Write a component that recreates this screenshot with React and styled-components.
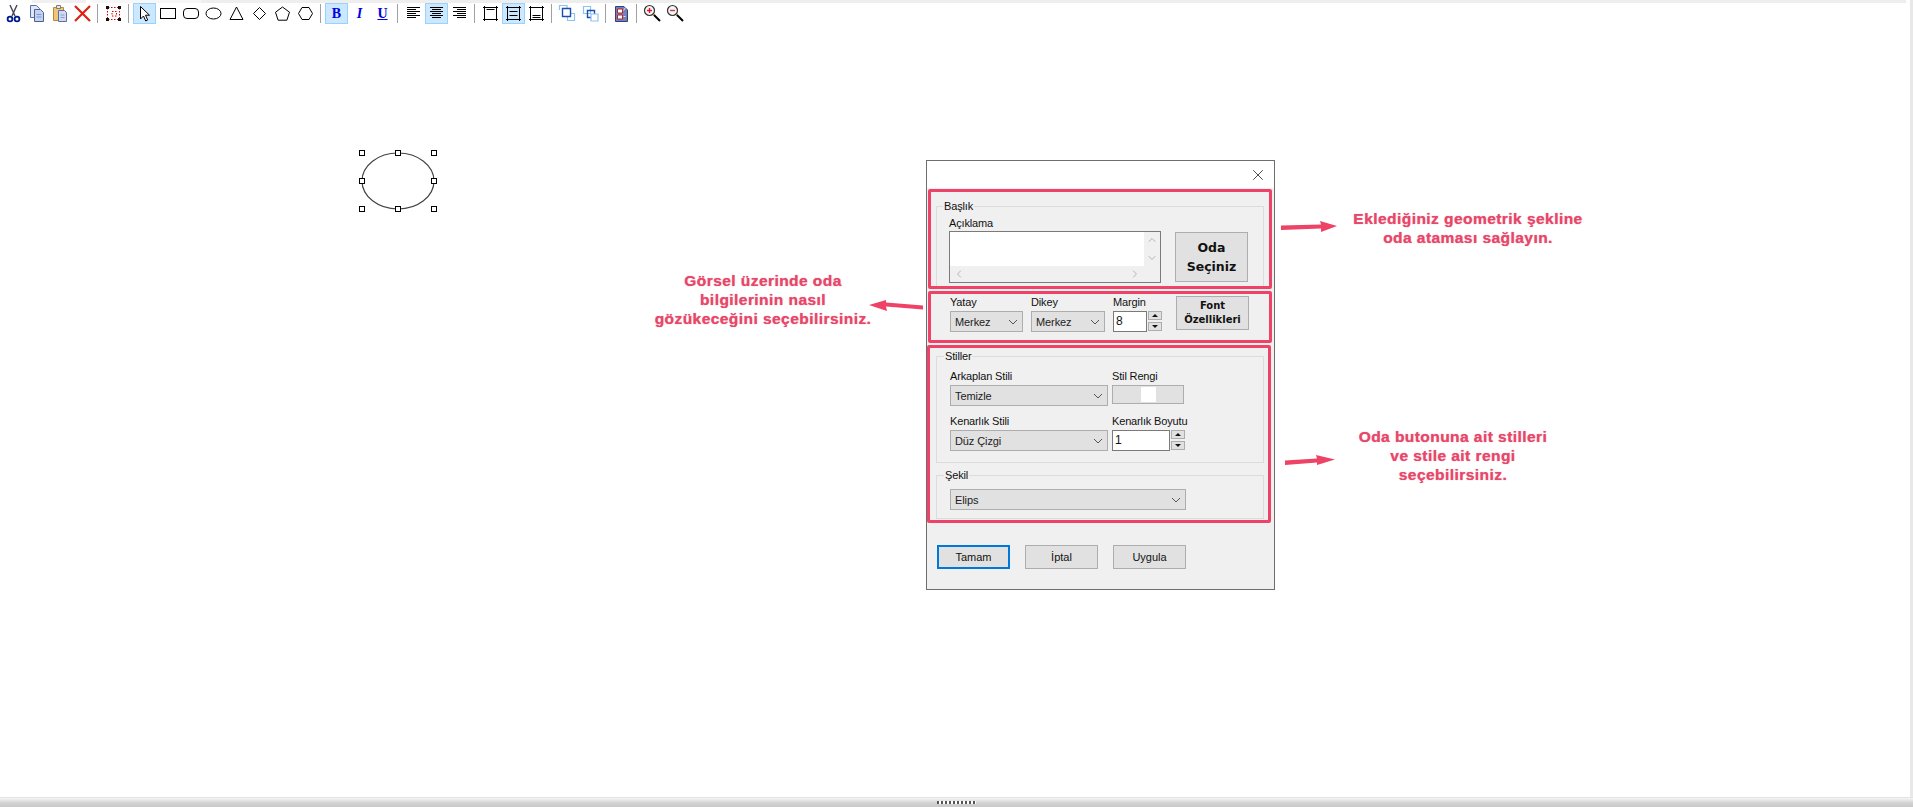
import React from "react";
import styled, { createGlobalStyle } from "styled-components";
import { ChevronUp, ChevronDown, ChevronLeft, ChevronRight, X } from "lucide-react";

const GlobalStyle = createGlobalStyle`
  html, body {
    margin: 0;
    padding: 0;
    background: #fff;
    overflow: hidden;
  }
  * {
    box-sizing: border-box;
  }
`;

const Page = styled.div`
  height: 807px;
  display: flex;
  flex-direction: column;
  font-family: "Liberation Sans", Arial, sans-serif;
  color: #111;
`;

const Workspace = styled.div`
  flex: 1;
  display: flex;
  flex-direction: column;
  border-right: 3px solid #e8e8e8;
  min-height: 0;
`;

const TopStrip = styled.div`
  height: 3px;
  margin: 0 4px 0 32px;
  background: linear-gradient(90deg, #f0f0f0 0 54px, #fff 54px 60px, #f7f7f7 60px 169px, #eeeeee 169px);
`;

const Toolbar = styled.div`
  height: 21px;
  display: flex;
  align-items: stretch;
  padding-left: 2px;
  background: #fff;
`;

const ToolButton = styled.div`
  width: 23px;
  display: flex;
  align-items: center;
  justify-content: center;
  border: 1px solid ${({ $active }) => ($active ? "#99d1ff" : "transparent")};
  background: ${({ $active }) => ($active ? "#cce8ff" : "transparent")};
`;

const ToolSep = styled.div`
  width: 1px;
  margin: 1px 4px 1px 3px;
  background: #a0a0a0;
`;

const Letter = styled.span`
  font-family: "Liberation Serif", serif;
  font-size: 14px;
  font-weight: 700;
  color: #0000e0;
  font-style: ${({ $italic }) => ($italic ? "italic" : "normal")};
  text-decoration: ${({ $under }) => ($under ? "underline" : "none")};
`;

const Canvas = styled.div`
  flex: 1;
  position: relative;
`;

const Splitter = styled.div`
  height: 10px;
  display: flex;
  align-items: center;
  justify-content: center;
  background: linear-gradient(#dcdcdc, #f2f2f2 15%, #d2d2d2 60%, #c8c8c8);
`;

const Grip = styled.div`
  width: 39px;
  height: 3px;
  background: repeating-linear-gradient(90deg, #555 0 2px, #fff 2px 4px);
`;

const Shape = styled.svg`
  position: absolute;
  left: 358px;
  top: 122px;
`;

const Dialog = styled.div`
  position: absolute;
  left: 926px;
  top: 136px;
  width: 349px;
  height: 430px;
  border: 1px solid #6e6e6e;
  background: #f0f0f0;
`;

const TitleBar = styled.div`
  height: 27px;
  background: #fff;
  display: flex;
  align-items: center;
  justify-content: flex-end;
  padding-right: 7px;
`;

const Section = styled.section`
  border: 3px solid #ee4266;
  border-radius: 2px;
  overflow: hidden;
  margin: ${({ $margin }) => $margin};
  height: ${({ $height }) => $height}px;
  padding: ${({ $padding }) => $padding};
`;

const Group = styled.fieldset`
  margin: 0;
  padding: ${({ $padding }) => $padding};
  border: 1px solid #dcdcdc;
  min-width: 0;
  width: 328px;
  height: ${({ $height }) => $height}px;
  & + & {
    margin-top: 5px;
  }
`;

const Legend = styled.legend`
  margin-left: -6px;
  padding: 0 1px;
  font-size: 11px;
  letter-spacing: -0.15px;
  line-height: 14px;
`;

const Label = styled.div`
  font-size: 11px;
  letter-spacing: -0.15px;
  line-height: 13px;
  height: 13px;
  white-space: nowrap;
  margin-bottom: ${({ $gap }) => $gap ?? 2}px;
`;

const Row = styled.div`
  display: flex;
  align-items: ${({ $align }) => $align || "flex-start"};
  gap: ${({ $gap }) => $gap}px;
`;

const Field = styled.div`
  width: ${({ $width }) => $width}px;
`;

const TextBox = styled.div`
  width: 212px;
  height: 52px;
  border: 1px solid #7a7a7a;
  background: #f0f0f0;
  display: grid;
  grid-template-columns: 1fr 16px;
  grid-template-rows: 1fr 16px;
`;

const TextBoxArea = styled.div`
  background: #fff;
`;

const ScrollV = styled.div`
  display: flex;
  flex-direction: column;
  align-items: center;
  justify-content: space-between;
  padding: 2px 0;
  color: #b4b4b4;
`;

const ScrollH = styled.div`
  display: flex;
  align-items: center;
  justify-content: space-between;
  padding: 0 3px;
  color: #b4b4b4;
`;

const Button = styled.div`
  width: ${({ $width }) => $width || 73}px;
  height: ${({ $height }) => $height || 24}px;
  margin-top: ${({ $top }) => $top || 0}px;
  border: 1px solid ${({ $focus }) => ($focus ? "#0078d7" : "#adadad")};
  border-width: ${({ $focus }) => ($focus ? 2 : 1)}px;
  background: #e1e1e1;
  display: flex;
  align-items: center;
  justify-content: center;
  text-align: center;
  font-size: 11px;
`;

const BoldButton = styled(Button)`
  font-family: "DejaVu Sans", sans-serif;
  font-weight: 700;
  font-size: ${({ $size }) => $size}px;
  line-height: ${({ $lead }) => $lead}px;
`;

const Select = styled.div`
  width: ${({ $width }) => $width}px;
  height: 21px;
  border: 1px solid #adadad;
  background: #e1e1e1;
  display: flex;
  align-items: center;
  justify-content: space-between;
  padding: 0 4px 0 4px;
  font-size: 11px;
  letter-spacing: -0.1px;
  color: #222;
`;

const Spin = styled.div`
  display: flex;
  gap: 1px;
`;

const SpinInput = styled.div`
  width: ${({ $width }) => $width}px;
  height: 21px;
  border: 1px solid #7a7a7a;
  background: #fff;
  padding-left: 2px;
  font-size: 12px;
  line-height: 19px;
`;

const SpinArrows = styled.div`
  display: flex;
  flex-direction: column;
  justify-content: space-between;
  width: 14px;
  height: 20px;
`;

const SpinArrow = styled.div`
  height: 9px;
  border: 1px solid #adadad;
  background: #e1e1e1;
  display: flex;
  align-items: center;
  justify-content: center;
  &::after {
    content: "";
    border-left: 3px solid transparent;
    border-right: 3px solid transparent;
    ${({ $down }) => ($down ? "border-top" : "border-bottom")}: 3px solid #111;
  }
`;

const ColorButton = styled.div`
  width: 72px;
  height: 19px;
  margin-top: 1px;
  border: 1px solid #adadad;
  background: #e1e1e1;
  display: flex;
  align-items: center;
  justify-content: center;
  &::after {
    content: "";
    width: 15px;
    height: 15px;
    border-radius: 1px;
    background: #fff;
  }
`;

const StyleGrid = styled.div`
  display: grid;
  grid-template-columns: 158px 73px;
  column-gap: 4px;
  row-gap: 9px;
`;

const DialogButtons = styled.div`
  display: flex;
  padding-left: 10px;
  margin-top: 22px;
  gap: 15px;
`;

const Note = styled.div`
  position: absolute;
  left: ${({ $x }) => $x}px;
  top: ${({ $y }) => $y}px;
  transform: translateX(-50%);
  text-align: center;
  white-space: nowrap;
  font-size: 15.5px;
  font-weight: 700;
  line-height: 19.2px;
  letter-spacing: 0.45px;
  color: #e6476a;
  text-shadow: 0 0 1px rgba(230, 71, 106, 0.8);
`;

const ArrowSvg = styled.svg`
  position: absolute;
  left: ${({ $x }) => $x}px;
  top: ${({ $y }) => $y}px;
`;

const Icon = ({ children }) => (
  <svg width="19" height="19" viewBox="0 0 19 19" fill="none" stroke="#000" strokeWidth="1">
    {children}
  </svg>
);

const CutIcon = () => (
  <Icon>
    <path d="M6 1l5 11M13 1L8 12" stroke="#445" strokeWidth="1.4" />
    <circle cx="6" cy="15" r="2.4" stroke="#001a8c" strokeWidth="1.8" />
    <circle cx="13" cy="15" r="2.4" stroke="#001a8c" strokeWidth="1.8" />
  </Icon>
);

const CopyIcon = () => (
  <Icon>
    <path d="M3.5 1.5h6l3 3v9h-9z" fill="#dfe6f5" stroke="#5a6ea8" />
    <path d="M7.5 5.5h6l3 3v9h-9z" fill="#c4d2ee" stroke="#4a5f9c" />
    <path d="M9.5 10.5h5M9.5 13h5" stroke="#7f97cf" />
  </Icon>
);

const PasteIcon = () => (
  <Icon>
    <path d="M3.5 3.5h10v13h-10z" fill="#f2c477" stroke="#b98a3a" />
    <path d="M6.5 1.5h4v3h-4z" fill="#dfe6f5" stroke="#7b7b7b" />
    <path d="M8.5 6.5h6l2 2v9h-8z" fill="#cfdaf0" stroke="#5a6ea8" />
    <path d="M10.5 11h4M10.5 13.5h4" stroke="#8aa0d0" />
  </Icon>
);

const DeleteIcon = () => (
  <Icon>
    <path d="M2 2l15 15M17 2L2 17" stroke="#e02010" strokeWidth="2.2" />
  </Icon>
);

const SelectIcon = () => (
  <svg width="17" height="17" viewBox="0 0 17 17" fill="none">
    <path d="M3 2.5h11M3 14.5h11M2.5 3v11M14.5 3v11" stroke="#e00000" strokeDasharray="1.5 1.5" />
    <path d="M7 6.5h4.5v4.5h-4.5z" stroke="#e00000" strokeDasharray="1.5 1.5" />
    <path d="M1 1h3v3H1zM13 1h3v3h-3zM1 13h3v3H1zM13 13h3v3h-3z" fill="#111" />
  </svg>
);

const PointerIcon = () => (
  <Icon>
    <path d="M5.5 2.5v12.5l3-3 2.2 5 2-1-2.2-4.8h4z" fill="#fff" />
  </Icon>
);

const AlignIcon = ({ rows }) => (
  <Icon>
    {rows.map(([x1, x2], i) => (
      <path key={i} d={`M${x1} ${3.5 + i * 2}H${x2}`} />
    ))}
  </Icon>
);

const FrameIcon = ({ lines }) => (
  <Icon>
    <path d="M2 3.5h15M2 15.5h15M3.5 2v15M15.5 2v15" />
    {lines.map((y) => (
      <path key={y} d={`M5.5 ${y}h8`} />
    ))}
  </Icon>
);

const OrderIcon = ({ front }) => (
  <Icon>
    {front ? (
      <>
        <path d="M9.5 9.5h7v7h-7z" stroke="#8cc4f0" strokeWidth="1.2" />
        <path d="M1.5 6V1.5H9v3" stroke="#8cc4f0" strokeWidth="1.2" />
        <path d="M4.5 4.5h8v8h-8z" fill="#fff" stroke="#1a4fb0" strokeWidth="1.4" />
      </>
    ) : (
      <>
        <path d="M2.5 2.5h7v7h-7z" fill="#fff" stroke="#8cc4f0" strokeWidth="1.2" />
        <path d="M6.5 6.5h7v7h-7z" stroke="#1a4fb0" strokeWidth="1.4" />
        <path d="M10 10h7v7h-7z" fill="#fff" stroke="#8cc4f0" strokeWidth="1.2" />
      </>
    )}
  </Icon>
);

const ReportIcon = () => (
  <Icon>
    <path d="M3.5 2.5h8.5l3.5 3.5v11.5h-12z" fill="#6f82bd" stroke="#34407a" />
    <path d="M5.5 5h5v4h-5zM5.5 11h5v4h-5z" fill="#fff" stroke="#c02020" />
    <path d="M11.5 6.5l2-3M11.5 12.5h2" stroke="#f0e0e0" />
  </Icon>
);

const ZoomIcon = ({ plus }) => (
  <Icon>
    <path d="M10.5 10.5l6.5 6.5" stroke="#000" strokeWidth="2" />
    <path d="M9.5 9.5l1.5 1.5" stroke="#e8d040" strokeWidth="2" />
    <circle cx="6.5" cy="6.5" r="5" fill="#f4f4f4" stroke="#333" strokeWidth="1.2" />
    <path d="M4 6.5h5" stroke={plus ? "#e01030" : "#c04050"} strokeWidth="1.4" />
    {plus && <path d="M6.5 4v5" stroke="#e01030" strokeWidth="1.4" />}
  </Icon>
);

const Chevron = () => (
  <svg width="10" height="6" viewBox="0 0 10 6" fill="none" stroke="#555" strokeWidth="1">
    <path d="M1 1l4 4 4-4" />
  </svg>
);

const Combo = ({ width, children }) => (
  <Select $width={width}>
    {children}
    <Chevron />
  </Select>
);

const Spinner = ({ width, value }) => (
  <Spin>
    <SpinInput $width={width}>{value}</SpinInput>
    <SpinArrows>
      <SpinArrow />
      <SpinArrow $down />
    </SpinArrows>
  </Spin>
);

const Arrow = ({ x, y, w, h, d }) => (
  <ArrowSvg $x={x} $y={y} width={w} height={h} viewBox={`0 0 ${w} ${h}`}>
    <path d={d} fill="#ee4266" />
  </ArrowSvg>
);

const shapes = (
  <>
    <ToolButton><Icon><rect x="2.5" y="4.5" width="15" height="10" strokeWidth="1" /></Icon></ToolButton>
    <ToolButton><Icon><rect x="2.5" y="4.5" width="15" height="10" rx="3.5" /></Icon></ToolButton>
    <ToolButton><Icon><ellipse cx="9.5" cy="9.5" rx="7.5" ry="5.5" /></Icon></ToolButton>
    <ToolButton><Icon><path d="M9.5 3l6.5 12.5H3z" /></Icon></ToolButton>
    <ToolButton><Icon><path d="M9.5 3.5l6 6-6 6-6-6z" /></Icon></ToolButton>
    <ToolButton><Icon><path d="M9.5 3l7 5.2-2.6 8H5.1l-2.6-8z" /></Icon></ToolButton>
    <ToolButton><Icon><path d="M6 3.5h7l3.5 6-3.5 6H6l-3.5-6z" /></Icon></ToolButton>
  </>
);

const App = () => {
  const handles = [
    [4, 7], [40, 7], [76, 7],
    [4, 35], [76, 35],
    [4, 63], [40, 63], [76, 63],
  ];

  return (
    <Page>
      <GlobalStyle />
      <Workspace>
        <TopStrip />
        <Toolbar>
          <ToolButton><CutIcon /></ToolButton>
          <ToolButton><CopyIcon /></ToolButton>
          <ToolButton><PasteIcon /></ToolButton>
          <ToolButton><DeleteIcon /></ToolButton>
          <ToolSep />
          <ToolButton><SelectIcon /></ToolButton>
          <ToolSep />
          <ToolButton $active><PointerIcon /></ToolButton>
          {shapes}
          <ToolSep />
          <ToolButton $active><Letter>B</Letter></ToolButton>
          <ToolButton><Letter $italic>I</Letter></ToolButton>
          <ToolButton><Letter $under>U</Letter></ToolButton>
          <ToolSep />
          <ToolButton><AlignIcon rows={[[3, 16], [3, 12], [3, 16], [3, 12], [3, 16], [3, 12]]} /></ToolButton>
          <ToolButton $active><AlignIcon rows={[[3, 16], [5, 14], [3, 16], [5, 14], [3, 16], [5, 14]]} /></ToolButton>
          <ToolButton><AlignIcon rows={[[3, 16], [7, 16], [3, 16], [7, 16], [3, 16], [7, 16]]} /></ToolButton>
          <ToolSep />
          <ToolButton><FrameIcon lines={[5.5]} /></ToolButton>
          <ToolButton $active><FrameIcon lines={[7.5, 11.5]} /></ToolButton>
          <ToolButton><FrameIcon lines={[11.5, 13.5]} /></ToolButton>
          <ToolSep />
          <ToolButton><OrderIcon front /></ToolButton>
          <ToolButton><OrderIcon /></ToolButton>
          <ToolSep />
          <ToolButton><ReportIcon /></ToolButton>
          <ToolSep />
          <ToolButton><ZoomIcon plus /></ToolButton>
          <ToolButton><ZoomIcon /></ToolButton>
        </Toolbar>

        <Canvas>
          <Shape width="80" height="70" viewBox="0 0 80 70">
            <ellipse cx="40" cy="35" rx="36" ry="28" fill="none" stroke="#444" strokeWidth="1.2" />
            {handles.map(([x, y]) => (
              <rect key={`${x}-${y}`} x={x - 2.5} y={y - 2.5} width="5" height="5" fill="#fff" stroke="#000" />
            ))}
          </Shape>

          <Dialog>
            <TitleBar>
              <X size={18} strokeWidth={1} color="#111" />
            </TitleBar>

            <Section $height={100} $margin="1px 2px 0 1px" $padding="7px 0 0 5px">
              <Group $height={100} $padding="4px 0 0 12px">
                <Legend>Başlık</Legend>
                <Label $gap={1}>Açıklama</Label>
                <Row $gap={14}>
                  <TextBox>
                    <TextBoxArea />
                    <ScrollV>
                      <ChevronUp size={12} />
                      <ChevronDown size={12} />
                    </ScrollV>
                    <ScrollH>
                      <ChevronLeft size={12} />
                      <ChevronRight size={12} />
                    </ScrollH>
                  </TextBox>
                  <BoldButton $height={50} $top={1} $size={12.5} $lead={19}>
                    Oda
                    <br />
                    Seçiniz
                  </BoldButton>
                </Row>
              </Group>
            </Section>

            <Section $height={52} $margin="2px 2px 0 1px" $padding="2px 0 0 19px">
              <Row $gap={14}>
                <Row $gap={8}>
                  <Field $width={73}>
                    <Label>Yatay</Label>
                    <Combo width={73}>Merkez</Combo>
                  </Field>
                  <Field $width={74}>
                    <Label>Dikey</Label>
                    <Combo width={74}>Merkez</Combo>
                  </Field>
                  <Field $width={49}>
                    <Label>Margin</Label>
                    <Spinner width={34} value="8" />
                  </Field>
                </Row>
                <BoldButton $height={34} $size={10} $lead={14}>
                  Font
                  <br />
                  Özellikleri
                </BoldButton>
              </Row>
            </Section>

            <Section $height={178} $margin="2px 3px 0 0" $padding="1px 0 0 6px">
              <Group $height={114} $padding="7px 0 0 13px">
                <Legend>Stiller</Legend>
                <StyleGrid>
                  <Field>
                    <Label>Arkaplan Stili</Label>
                    <Combo width={158}>Temizle</Combo>
                  </Field>
                  <Field>
                    <Label>Stil Rengi</Label>
                    <ColorButton />
                  </Field>
                  <Field>
                    <Label>Kenarlık Stili</Label>
                    <Combo width={158}>Düz Çizgi</Combo>
                  </Field>
                  <Field>
                    <Label>Kenarlık Boyutu</Label>
                    <Spinner width={58} value="1" />
                  </Field>
                </StyleGrid>
              </Group>
              <Group $height={51} $padding="7px 0 0 13px">
                <Legend>Şekil</Legend>
                <Combo width={236}>Elips</Combo>
              </Group>
            </Section>

            <DialogButtons>
              <Button $focus>Tamam</Button>
              <Button>İptal</Button>
              <Button>Uygula</Button>
            </DialogButtons>
          </Dialog>

          <Note $x={1468} $y={185}>
            Eklediğiniz geometrik şekline
            <br />
            oda ataması sağlayın.
          </Note>
          <Arrow x={1280} y={196} w={58} h={14} d="M1 5.5L41 4.5 40 1 57 6 41 12 41 8.5 1 10z" />

          <Note $x={763} $y={247}>
            Görsel üzerinde oda
            <br />
            bilgilerinin nasıl
            <br />
            gözükeceğini seçebilirsiniz.
          </Note>
          <Arrow x={868} y={275} w={56} h={15} d="M55 10.5L18 7.5 19 12 1 6 18 1 18 3.5 55 6.5z" />

          <Note $x={1453} $y={403}>
            Oda butonuna ait stilleri
            <br />
            ve stile ait rengi
            <br />
            seçebilirsiniz.
          </Note>
          <Arrow x={1284} y={430} w={52} h={14} d="M1 6.5L33 4.5 32 1 51 5.5 33 11 33 8.5 1 11z" />
        </Canvas>
      </Workspace>

      <Splitter>
        <Grip />
      </Splitter>
    </Page>
  );
};

export default App;
